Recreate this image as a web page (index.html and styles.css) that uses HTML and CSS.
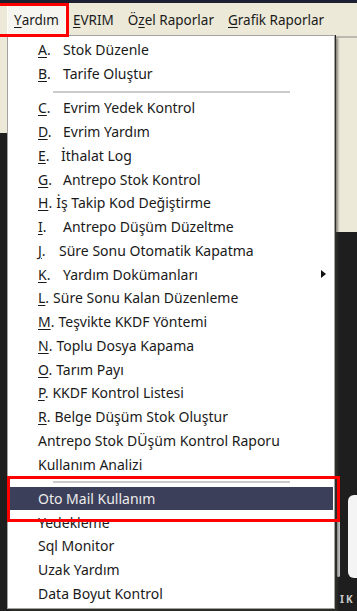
FILE: index.html
```html
<!DOCTYPE html>
<html lang="tr">
<head>
<meta charset="utf-8">
<title>Yardım menüsü</title>
<link rel="stylesheet" href="styles.css">
</head>
<body>
<div class="screen">
  <div class="topstrip"></div>
  <nav class="menubar">
    <span class="mb-item active"><u>Y</u>ardım</span>
    <span class="mb-item"><u>E</u>VRIM</span>
    <span class="mb-item">Ö<u>z</u>el Raporlar</span>
    <span class="mb-item"><u>G</u>rafik Raporlar</span>
  </nav>
  <div class="workspace">
    <div class="ws-left"><div class="beige-l"></div></div>
    <div class="ws-mid"></div>
    <div class="ws-right">
      <div class="beige-r"></div>
      <div class="bits">
        <div class="strip"></div>
        <div class="tab"></div>
      </div>
      <div class="ik">IK</div>
    </div>
  </div>

  <ul class="dropdown">
    <li class="row"><span class="k t"><u>A</u>.</span>Stok Düzenle</li>
    <li class="row"><span class="k t"><u>B</u>.</span>Tarife Oluştur</li>
    <li class="sep"></li>
    <li class="row"><span class="k t"><u>C</u>.</span>Evrim Yedek Kontrol</li>
    <li class="row"><span class="k t"><u>D</u>.</span>Evrim Yardım</li>
    <li class="row"><span class="k e"><u>E</u>.</span>İthalat Log</li>
    <li class="row"><span class="k t"><u>G</u>.</span>Antrepo Stok Kontrol</li>
    <li class="row"><span class="k"><u>H</u>.</span>İş Takip Kod Değiştirme</li>
    <li class="row"><span class="k t"><u>I</u>.</span>Antrepo Düşüm Düzeltme</li>
    <li class="row"><span class="k j"><u>J</u>.</span>Süre Sonu Otomatik Kapatma</li>
    <li class="row sub"><span class="k t"><u>K</u>.</span>Yardım Dokümanları<span class="arrow"></span></li>
    <li class="row"><span class="k"><u>L</u>.</span>Süre Sonu Kalan Düzenleme</li>
    <li class="row"><span class="k"><u>M</u>.</span>Teşvikte KKDF Yöntemi</li>
    <li class="row"><span class="k"><u>N</u>.</span>Toplu Dosya Kapama</li>
    <li class="row"><span class="k"><u>O</u>.</span>Tarım Payı</li>
    <li class="row"><span class="k"><u>P</u>.</span>KKDF Kontrol Listesi</li>
    <li class="row"><span class="k"><u>R</u>.</span>Belge Düşüm Stok Oluştur</li>
    <li class="row">Antrepo Stok DÜşüm Kontrol Raporu</li>
    <li class="row">Kullanım Analizi</li>
    <li class="sep"></li>
    <li class="row hl">Oto Mail Kullanım</li>
    <li class="row">Yedekleme</li>
    <li class="row">Sql Monitor</li>
    <li class="row">Uzak Yardım</li>
    <li class="row">Data Boyut Kontrol</li>
  </ul>

  <div class="redbox redbox-1"></div>
  <div class="redbox redbox-2"></div>
</div>
</body>
</html>
```

FILE: styles.css
```css
* { box-sizing: border-box; }
html, body { margin: 0; padding: 0; }
body {
  width: 357px;
  height: 611px;
  overflow: hidden;
  background: #1e1e1e;
  font-family: "Noto Sans", "Open Sans", sans-serif;
}
.screen {
  position: relative;
  width: 357px;
  height: 611px;
  display: flex;
  flex-direction: column;
}
.topstrip {
  height: 3px;
  background: #1d2030;
  flex: none;
}
.menubar {
  height: 32px;
  flex: none;
  background: #ece9d8;
  display: flex;
  align-items: stretch;
  padding: 2px 0 0 7px;
  font-size: 13.5px;
  color: #1b1b1b;
}
.mb-item {
  display: flex;
  align-items: center;
  padding: 0 7px;
  white-space: nowrap;
}
.mb-item.active {
  background: #f6f5f0;
  border: 1px solid #fbfbf8;
  padding: 0 6px;
}
.mb-item u { text-underline-offset: 2px; }

.workspace {
  flex: 1;
  display: grid;
  grid-template-columns: 7px 1fr 21px;
}
.beige-l {
  height: 98px;
  background: #ece9d8;
}
.ws-right {
  display: flex;
  flex-direction: column;
}
.beige-r {
  height: 197px;
  background: #ece9d8;
  border-top: 1px solid #ece9d8;
  box-shadow: inset 0 3px 0 -1px #bcbab0;
}
.bits {
  display: flex;
  align-items: flex-start;
  margin-top: 251px;
}
.strip {
  width: 3px;
  height: 94px;
  margin-left: 1px;
  background: #c4c4c4;
  border-radius: 2px;
}
.tab {
  width: 9px;
  height: 83px;
  margin-top: 12px;
  margin-left: 8px;
  background: #f4f4f4;
  border-radius: 6px 0 0 6px;
}
.ik {
  margin-top: 16px;
  padding-left: 4px;
  font-size: 10px;
  font-weight: bold;
  letter-spacing: 2px;
  color: #c9c9c9;
  line-height: 11px;
  white-space: nowrap;
}

.dropdown {
  position: absolute;
  left: 7px;
  top: 35px;
  width: 328px;
  margin: 0;
  padding: 2px 0 3px;
  list-style: none;
  background: #ffffff;
  border: 1px solid #a2a2a2;
  box-shadow: 3px 3px 2px rgba(60, 60, 50, 0.55);
  font-size: 14px;
  color: #1a1a1a;
}
.row {
  height: 23.75px;
  display: flex;
  align-items: center;
  padding-left: 30px;
  white-space: nowrap;
  position: relative;
}
.row u { text-underline-offset: 2px; }
.k { margin-right: 4px; }
.k.t { display: inline-block; width: 25px; margin-right: 0; }
.k.e { display: inline-block; width: 23px; margin-right: 0; }
.k.j { display: inline-block; width: 21px; margin-right: 0; }
.sep {
  height: 10.5px;
  position: relative;
}
.sep::after {
  content: "";
  position: absolute;
  left: 45px;
  top: 5px;
  width: 237px;
  height: 2px;
  background: #cbcbcb;
}
.arrow {
  position: absolute;
  left: 313px;
  top: 8px;
  width: 0;
  height: 0;
  border-top: 4px solid transparent;
  border-bottom: 4px solid transparent;
  border-left: 5px solid #111;
}
.row.hl {
  background: #3c3f59;
  color: #ececec;
  margin: 0 1px 0 2px;
  padding-left: 28px;
}

.redbox {
  position: absolute;
  border: 3.5px solid #ff0000;
}
.redbox-1 {
  left: -4px;
  top: 3px;
  width: 73px;
  height: 34px;
}
.redbox-2 {
  left: 7px;
  top: 476px;
  width: 333px;
  height: 46px;
}
```
